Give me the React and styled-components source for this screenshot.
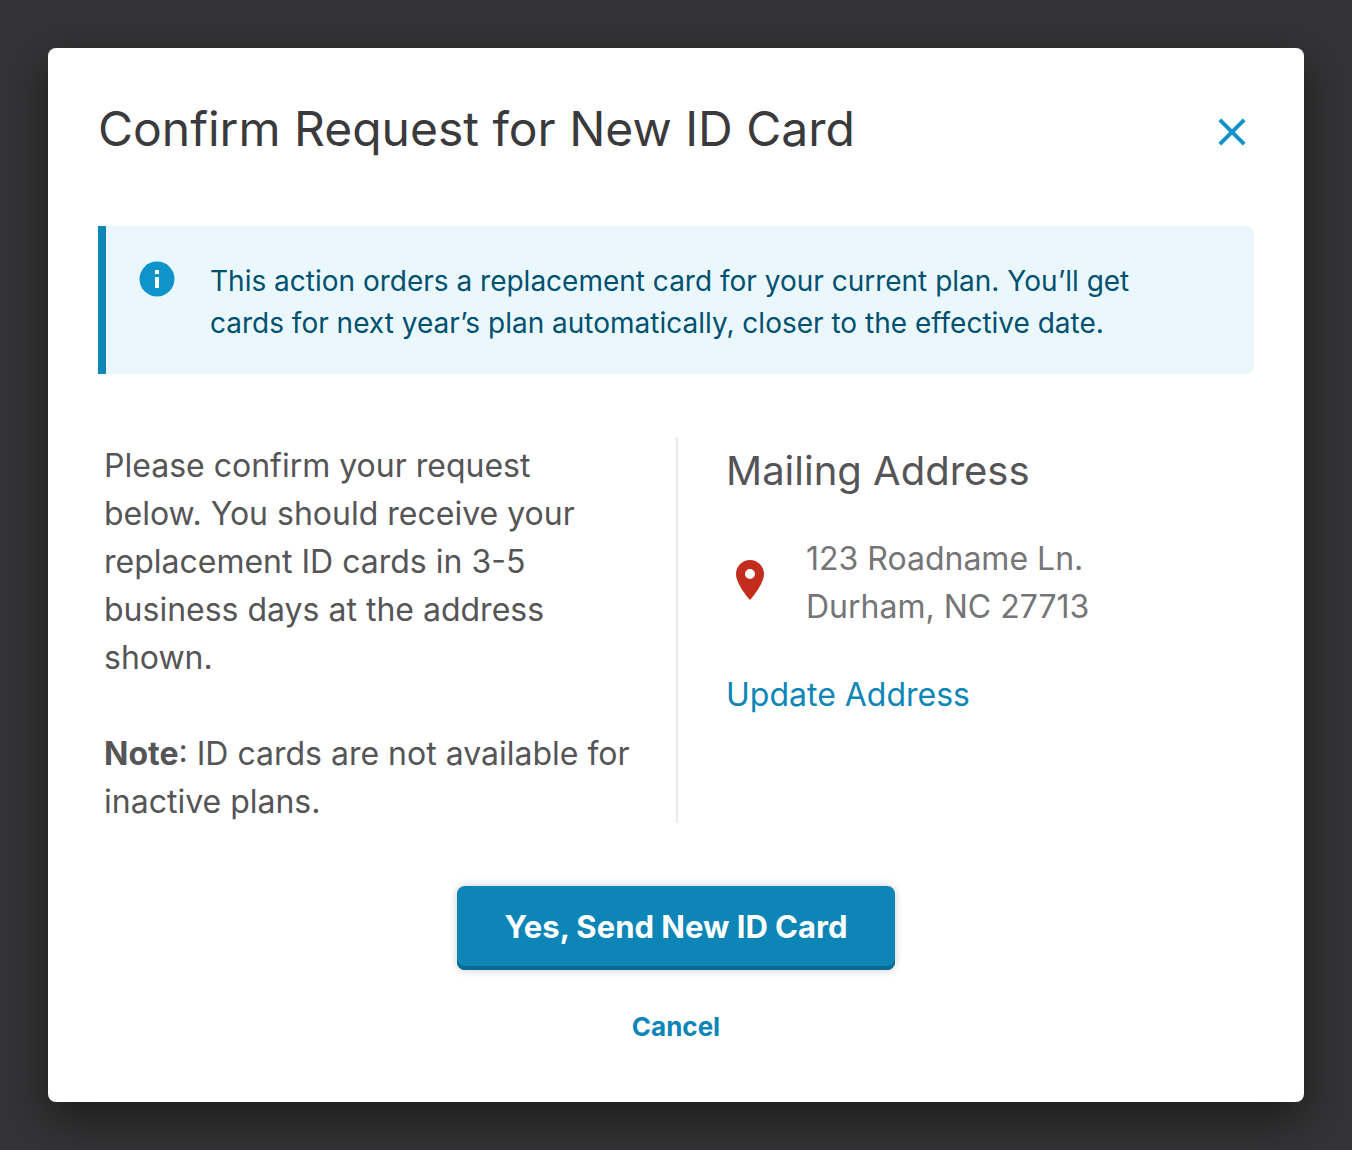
import React from "react";
import styled, { createGlobalStyle } from "styled-components";

const fontStack = `Inter, "Liberation Sans", Arial, sans-serif`;

const GlobalStyle = createGlobalStyle`
  * { box-sizing: border-box; }
  body { margin: 0; background: #343436; font-family: ${fontStack}; }
`;

const Backdrop = styled.main`
  min-height: 100vh;
  padding: 48px;
`;

const Dialog = styled.section`
  padding: 47px 50px 54px;
  border-radius: 8px;
  background: #fff;
  box-shadow: 0 16px 48px rgba(0, 0, 0, 0.5);
`;

const Header = styled.header`
  display: flex;
  align-items: center;
  justify-content: space-between;
`;

const Title = styled.h1`
  margin: 0;
  color: #3a3a3d;
  font-size: 48px;
  line-height: 68px;
  font-weight: 400;
`;

const CloseButton = styled.button`
  display: flex;
  padding: 14px 8px 8px;
  border: 0;
  background: none;
  color: #0f93cb;
  cursor: pointer;
`;

const Notice = styled.div`
  display: flex;
  gap: 34px;
  margin-top: 63px;
  padding: 34px 80px 30px 32px;
  border-left: 8px solid #0d86b7;
  border-radius: 0 8px 8px 0;
  background: #eaf8fe;
  color: #00506f;
`;

const NoticeText = styled.p`
  margin: 0;
  font-size: 28px;
  line-height: 42px;
`;

const Columns = styled.div`
  display: grid;
  grid-template-columns: 1fr 1fr;
  margin-top: 63px;
`;

const Details = styled.div`
  padding: 5px 46px 0 6px;
  color: #555558;
  font-size: 32px;
  line-height: 48px;
`;

const Paragraph = styled.p`
  margin: 0 0 48px;
  &:last-child { margin-bottom: 0; }
`;

const Mailing = styled.div`
  margin-bottom: 3px;
  padding: 6px 0 0 48px;
  border-left: 2px solid #e8e9eb;
`;

const Subtitle = styled.h2`
  margin: 0 0 36px;
  color: #555558;
  font-size: 40px;
  line-height: 56px;
  font-weight: 400;
`;

const AddressRow = styled.div`
  display: flex;
  align-items: center;
  gap: 42px;
  padding-left: 10px;
`;

const Address = styled.address`
  color: #757578;
  font-size: 32px;
  line-height: 48px;
  font-style: normal;
`;

const UpdateLink = styled.a`
  display: inline-block;
  margin-top: 40px;
  color: #0d86b7;
  font-size: 32px;
  line-height: 48px;
  text-decoration: none;
`;

const Actions = styled.footer`
  display: flex;
  flex-direction: column;
  align-items: center;
  gap: 36px;
  margin-top: 60px;
`;

const PrimaryButton = styled.button`
  min-width: 438px;
  padding: 17px 40px 19px;
  border: 0;
  border-radius: 8px;
  background: #0d86b7;
  color: #fff;
  box-shadow: inset 0 -4px 0 #0a6a92, 0 0 8px rgba(0, 0, 0, 0.2);
  font: 700 31px/48px ${fontStack};
  cursor: pointer;
`;

const CancelButton = styled.button`
  padding: 0;
  border: 0;
  background: none;
  color: #0d86b7;
  font: 700 26px/42px ${fontStack};
  cursor: pointer;
`;

const Icon = styled.svg`
  display: block;
  flex: none;
`;

export default function App() {
  return (
    <>
      <GlobalStyle />
      <Backdrop>
        <Dialog role="dialog" aria-modal="true" aria-labelledby="dialog-title">
          <Header>
            <Title id="dialog-title">Confirm Request for New ID Card</Title>
            <CloseButton type="button" aria-label="Close">
              <Icon width="28" height="28" viewBox="0 0 28 28">
                <path d="M1.800 1.800 26.200 26.200M26.200 1.800 1.800 26.200" fill="none" stroke="currentColor" strokeWidth="4" />
              </Icon>
            </CloseButton>
          </Header>
          <Notice>
            <Icon width="38" height="38" viewBox="0 0 38 38" aria-hidden="true">
              <circle cx="19" cy="19" r="17.500" fill="#0f93cb" />
              <path d="M17 10h4v4h-4zM17 17h4v11h-4z" fill="#fff" />
            </Icon>
            <NoticeText>
              This action orders a replacement card for your current plan. You’ll get cards for next year’s plan
              automatically, closer to the effective date.
            </NoticeText>
          </Notice>
          <Columns>
            <Details>
              <Paragraph>
                Please confirm your request below. You should receive your replacement ID cards in 3-5 business days at
                the address shown.
              </Paragraph>
              <Paragraph>
                <strong>Note</strong>: ID cards are not available for inactive plans.
              </Paragraph>
            </Details>
            <Mailing>
              <Subtitle>Mailing Address</Subtitle>
              <AddressRow>
                <Icon width="28" height="46" viewBox="0 0 28 46" aria-hidden="true">
                  <path
                    d="M14 0C6.300 0 0 6.300 0 14c0 10.500 14 26 14 26s14-15.500 14-26C28 6.300 21.700 0 14 0zm0 19a5 5 0 1 1 0-10 5 5 0 0 1 0 10z"
                    fill="#c22d1d"
                  />
                </Icon>
                <Address>
                  123 Roadname Ln.
                  <br />
                  Durham, NC 27713
                </Address>
              </AddressRow>
              <UpdateLink href="#address">Update Address</UpdateLink>
            </Mailing>
          </Columns>
          <Actions>
            <PrimaryButton type="button">Yes, Send New ID Card</PrimaryButton>
            <CancelButton type="button">Cancel</CancelButton>
          </Actions>
        </Dialog>
      </Backdrop>
    </>
  );
}
